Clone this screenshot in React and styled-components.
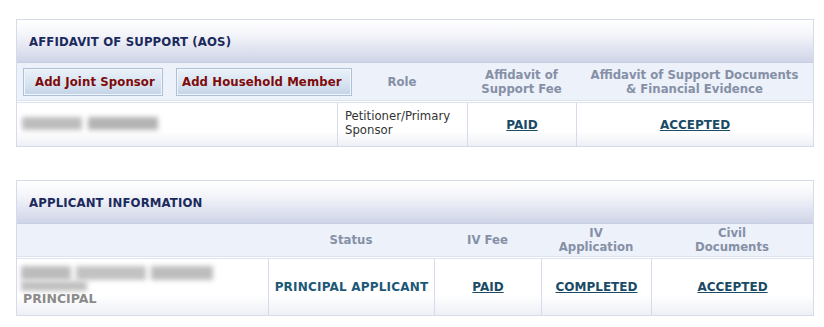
import React from "react";
import styled, { createGlobalStyle } from "styled-components";

const Global = createGlobalStyle`
  html, body { margin: 0; padding: 0; background: #ffffff; }
  body { font-family: Tahoma, "DejaVu Sans Condensed", "DejaVu Sans", Verdana, sans-serif; }
`;

const Page = styled.div`
  padding: 19px 10px 10px 16px;
  display: flex;
  flex-direction: column;
  gap: 33px;
  width: 798px;
`;

const Panel = styled.section`
  border: 1px solid #d6dbec;
  background: #ffffff;
`;

const PanelHeader = styled.div`
  height: 42px;
  display: flex;
  align-items: center;
  padding-left: 12px;
  background: linear-gradient(to bottom, #ffffff 0%, #f4f5fa 35%, #cfd4e7 100%);
  border-bottom: 1px solid #c8cfe3;
  color: #1b2a5c;
  font-weight: bold;
  font-size: 13px;
  letter-spacing: 0.15px;
`;

const HeadRow = styled.div`
  display: grid;
  grid-template-columns: ${(p) => p.$cols};
  height: ${(p) => p.$h}px;
  background: #edf1fa;
  border-bottom: 1px solid #dde2ef;
`;

const HeadCell = styled.div`
  display: flex;
  align-items: center;
  justify-content: center;
  text-align: center;
  color: #8590a6;
  font-weight: bold;
  font-size: 13px;
  line-height: 14px;
  white-space: nowrap;
`;

const ButtonCell = styled.div`
  display: flex;
  align-items: center;
  gap: 13px;
  padding-left: 6px;
  white-space: nowrap;
  overflow: visible;
  z-index: 1;
`;

const ActionButton = styled.button`
  flex: 0 0 auto;
  box-sizing: border-box;
  height: 28px;
  width: ${(p) => p.$w}px;
  padding: 0 0 0 ${(p) => p.$pad}px;
  text-align: left;
  border: 1px solid #aebfd8;
  box-shadow: inset 0 0 0 1px #f2f6fb;
  background: linear-gradient(to bottom, #eaf1f9 0%, #d9e5f2 50%, #c4d4e7 100%);
  color: #7f0a0a;
  font-family: inherit;
  font-weight: bold;
  font-size: 13px;
  letter-spacing: 0.1px;
  cursor: pointer;
`;

const Spacer = styled.div`
  height: 1px;
  background: #ffffff;
`;

const DataRow = styled.div`
  display: grid;
  grid-template-columns: ${(p) => p.$cols};
  height: ${(p) => p.$h}px;
  border-top: 1px solid #dde2ef;
`;

const DataCell = styled.div`
  display: flex;
  align-items: center;
  justify-content: ${(p) => (p.$left ? "flex-start" : "center")};
  padding-left: ${(p) => p.$pl || 0}px;
  border-left: ${(p) => (p.$first ? "none" : "1px solid #d5dbea")};
  background: linear-gradient(to bottom, #ffffff 0%, #ffffff 65%, #eef0f6 100%);
  box-sizing: border-box;
`;

const RoleText = styled.div`
  align-self: flex-start;
  padding-top: 6px;
  color: #333;
  font-size: 13px;
  line-height: 14px;
`;

const StatusLink = styled.a`
  font-family: "DejaVu Sans", Verdana, sans-serif;
  color: #1a4a66;
  font-weight: bold;
  font-size: 12px;
  text-decoration: underline;
  cursor: pointer;
`;

const StatusText = styled.span`
  font-family: "DejaVu Sans", Verdana, sans-serif;
  color: #1c5877;
  font-weight: bold;
  font-size: 12px;
  letter-spacing: 0.2px;
`;

const BlurLine = styled.div`
  display: flex;
  gap: ${(p) => p.$gap || 0}px;
  filter: blur(2.5px);
  margin: ${(p) => p.$m || "0"};
`;

const BlurWord = styled.div`
  width: ${(p) => p.$w}px;
  height: ${(p) => p.$h}px;
  background: ${(p) => p.$bg || "#b5b5b5"};
`;

const NameWrap = styled.div`
  display: flex;
  flex-direction: column;
  margin-top: -2px;
`;

const Principal = styled.div`
  font-family: "DejaVu Sans", Verdana, sans-serif;
  color: #8a8a8a;
  font-weight: bold;
  font-size: 12.5px;
  line-height: 14px;
  margin: 1px 0 0 2px;
`;

const cols1 = "320px 130px 109px 1fr";
const cols2 = "251px 166px 107px 110px 1fr";

export default function App() {
  return (
    <>
      <Global />
      <Page>
        <Panel>
          <PanelHeader>AFFIDAVIT OF SUPPORT (AOS)</PanelHeader>
          <HeadRow $cols={cols1} $h={37}>
            <ButtonCell>
              <ActionButton $w={140} $pad={11}>Add Joint Sponsor</ActionButton>
              <ActionButton $w={176} $pad={5}>Add Household Member</ActionButton>
            </ButtonCell>
            <HeadCell>Role</HeadCell>
            <HeadCell>
              Affidavit of
              <br />
              Support Fee
            </HeadCell>
            <HeadCell>
              Affidavit of Support Documents
              <br />& Financial Evidence
            </HeadCell>
          </HeadRow>
          <Spacer />
          <DataRow $cols={cols1} $h={43}>
            <DataCell $first $left $pl={5}>
              <BlurLine $gap={6} $m="0 0 3px 0">
                <BlurWord $w={60} $h={13} $bg="#bdbdbd" />
                <BlurWord $w={70} $h={13} $bg="#b3b3b3" />
              </BlurLine>
            </DataCell>
            <DataCell $left $pl={7}>
              <RoleText>
                Petitioner/Primary
                <br />
                Sponsor
              </RoleText>
            </DataCell>
            <DataCell>
              <StatusLink>PAID</StatusLink>
            </DataCell>
            <DataCell>
              <StatusLink>ACCEPTED</StatusLink>
            </DataCell>
          </DataRow>
        </Panel>

        <Panel>
          <PanelHeader>APPLICANT INFORMATION</PanelHeader>
          <HeadRow $cols={cols2} $h={32}>
            <HeadCell />
            <HeadCell>Status</HeadCell>
            <HeadCell>IV Fee</HeadCell>
            <HeadCell>
              IV
              <br />
              Application
            </HeadCell>
            <HeadCell>
              Civil
              <br />
              Documents
            </HeadCell>
          </HeadRow>
          <Spacer />
          <DataRow $cols={cols2} $h={56}>
            <DataCell $first $left $pl={4}>
              <NameWrap>
                <BlurLine $gap={5}>
                  <BlurWord $w={50} $h={14} $bg="#bcbcbc" />
                  <BlurWord $w={70} $h={14} $bg="#c2c2c2" />
                  <BlurWord $w={62} $h={14} $bg="#bdbdbd" />
                </BlurLine>
                <BlurLine $m="1px 0 0 0">
                  <BlurWord $w={66} $h={10} $bg="#c0c0c0" />
                </BlurLine>
                <Principal>PRINCIPAL</Principal>
              </NameWrap>
            </DataCell>
            <DataCell>
              <StatusText>PRINCIPAL APPLICANT</StatusText>
            </DataCell>
            <DataCell>
              <StatusLink>PAID</StatusLink>
            </DataCell>
            <DataCell>
              <StatusLink>COMPLETED</StatusLink>
            </DataCell>
            <DataCell>
              <StatusLink>ACCEPTED</StatusLink>
            </DataCell>
          </DataRow>
        </Panel>
      </Page>
    </>
  );
}
